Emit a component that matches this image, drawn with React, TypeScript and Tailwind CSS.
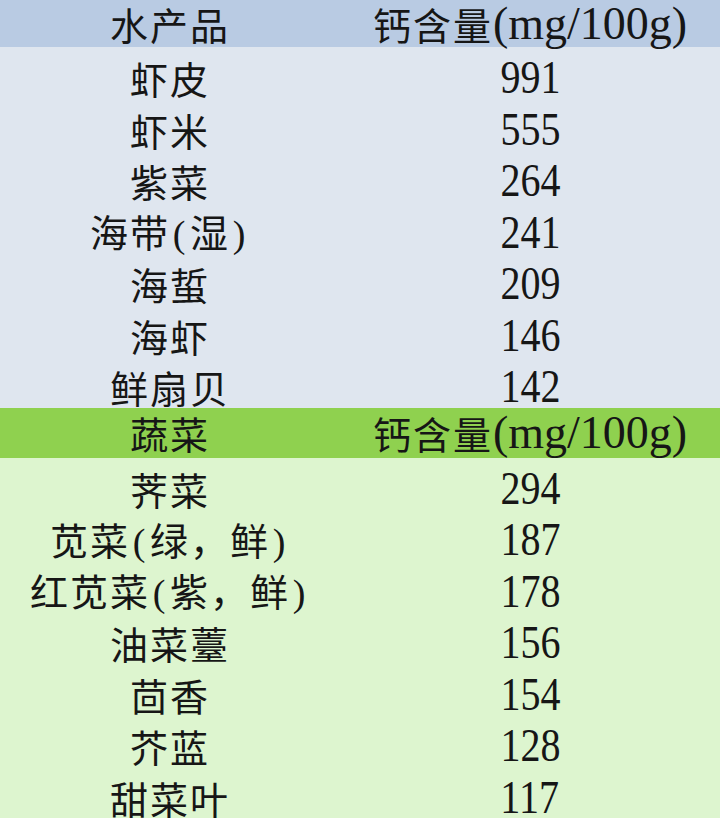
import React from "react";

const cjk = '"Noto Sans CJK SC", "Noto Sans", sans-serif';
const serif = '"Liberation Serif", "Times New Roman", serif';

function P({ c }: { c: string }) {
  return (
    <span className="inline-block w-[20px] text-center" style={{ fontFamily: serif }}>
      {c}
    </span>
  );
}

function Name({ text }: { text: string }) {
  const parts: React.ReactNode[] = [];
  let buf = "";
  Array.from(text).forEach((ch, i) => {
    if (ch === "(" || ch === ")") {
      if (buf) parts.push(<span key={"b" + i}>{buf}</span>);
      buf = "";
      parts.push(<P key={"p" + i} c={ch} />);
    } else buf += ch;
  });
  if (buf) parts.push(<span key="end">{buf}</span>);
  return <span className="whitespace-nowrap">{parts}</span>;
}

function Header({ title, bg, h }: { title: string; bg: string; h: string }) {
  return (
    <div className={`grid grid-cols-[340px_380px] ${h} ${bg} leading-none`}>
      <div className="flex items-center justify-center text-[38px] tracking-[2px]">
        <Name text={title} />
      </div>
      <div className="flex items-center justify-center whitespace-nowrap">
        <span className="text-[38px] tracking-[2px]">钙含量</span>
        <span className="text-[46px] leading-none" style={{ fontFamily: serif }}>
          (mg/100g)
        </span>
      </div>
    </div>
  );
}

function Row({ name, val }: { name: string; val: string }) {
  return (
    <div className="grid grid-cols-[340px_380px] h-[51.5px] leading-none">
      <div className="flex items-center justify-center text-[38px] tracking-[2px] pt-[8px]">
        <Name text={name} />
      </div>
      <div className="flex items-center justify-center pt-[8px]">
        <span
          className="inline-block text-[46px] leading-none scale-x-[0.87]"
          style={{ fontFamily: serif }}
        >
          {val}
        </span>
      </div>
    </div>
  );
}

const sea = [
  ["虾皮", "991"],
  ["虾米", "555"],
  ["紫菜", "264"],
  ["海带(湿)", "241"],
  ["海蜇", "209"],
  ["海虾", "146"],
  ["鲜扇贝", "142"],
];

const veg = [
  ["荠菜", "294"],
  ["苋菜(绿，鲜)", "187"],
  ["红苋菜(紫，鲜)", "178"],
  ["油菜薹", "156"],
  ["茴香", "154"],
  ["芥蓝", "128"],
  ["甜菜叶", "117"],
];

export default function App() {
  return (
    <div
      className="w-[720px] h-[819px] overflow-hidden text-[#161616]"
      style={{ fontFamily: cjk }}
    >
      <Header title="水产品" bg="bg-[#b9cbe3]" h="h-[47px]" />
      <div className="bg-[#dfe6ef]">
        {sea.map(([n, v]) => (
          <Row key={n} name={n} val={v} />
        ))}
      </div>
      <Header title="蔬菜" bg="bg-[#8fd14f]" h="h-[50px]" />
      <div className="bg-[#ddf5cf]">
        {veg.map(([n, v]) => (
          <Row key={n} name={n} val={v} />
        ))}
      </div>
    </div>
  );
}
